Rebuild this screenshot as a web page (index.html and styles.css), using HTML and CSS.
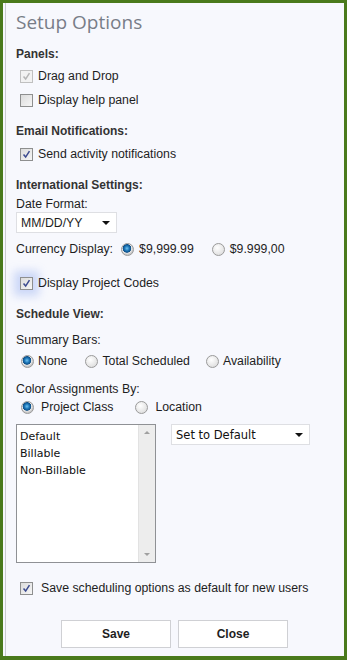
FILE: index.html
```html
<!DOCTYPE html>
<html lang="en">
<head>
  <meta charset="UTF-8">
  <title>Setup Options</title>
  <link rel="stylesheet" href="styles.css">
</head>
<body>

<div class="dialog">
  <h1 class="title">Setup Options</h1>

  <div class="heading">Panels:</div>
  <div class="row">
    <span class="box disabled"><svg viewBox="0 0 13 13"><path d="M3 6.5 L5.5 9.5 L10 2.5" /></svg></span>
    <span class="muted-label">Drag and Drop</span>
  </div>
  <div class="row">
    <span class="box"></span>
    <span>Display help panel</span>
  </div>

  <div class="heading gap">Email Notifications:</div>
  <div class="row">
    <span class="box"><svg viewBox="0 0 13 13"><path d="M3 6.5 L5.5 9.5 L10 2.5" /></svg></span>
    <span>Send activity notifications</span>
  </div>

  <div class="heading gap">International Settings:</div>
  <div class="label">Date Format:</div>
  <div class="select date-select">
    <span>MM/DD/YY</span>
    <span class="arrow"></span>
  </div>
  <div class="row currency">
    <span>Currency Display:</span>
    <span class="radio on"></span><span>$9,999.99</span>
    <span class="radio second"></span><span>$9.999,00</span>
  </div>

  <div class="row codes">
    <span class="box focus"><svg viewBox="0 0 13 13"><path d="M3 6.5 L5.5 9.5 L10 2.5" /></svg></span>
    <span>Display Project Codes</span>
  </div>

  <div class="heading schedule">Schedule View:</div>
  <div class="label sub">Summary Bars:</div>
  <div class="row radios">
    <span class="radio on"></span><span class="opt-none">None</span>
    <span class="radio"></span><span class="opt-total">Total Scheduled</span>
    <span class="radio"></span><span>Availability</span>
  </div>
  <div class="label sub2">Color Assignments By:</div>
  <div class="row radios color-row">
    <span class="radio on"></span><span class="opt-class">Project Class</span>
    <span class="radio"></span><span>Location</span>
  </div>

  <div class="lists">
    <div class="listbox">
      <div class="items">
        <div>Default</div>
        <div>Billable</div>
        <div>Non-Billable</div>
      </div>
      <div class="scrollbar">
        <span class="up"></span>
        <span class="down"></span>
      </div>
    </div>
    <div class="select default-select">
      <span>Set to Default</span>
      <span class="arrow"></span>
    </div>
  </div>

  <div class="row save-default">
    <span class="box"><svg viewBox="0 0 13 13"><path d="M3 6.5 L5.5 9.5 L10 2.5" /></svg></span>
    <span>Save scheduling options as default for new users</span>
  </div>

  <div class="buttons">
    <button class="btn">Save</button>
    <button class="btn">Close</button>
  </div>
</div>

</body>
</html>
```

FILE: styles.css
```css
html, body {
  margin: 0;
  padding: 0;
  height: 100%;
}

body {
  font-family: "Liberation Sans", Arial, sans-serif;
  font-size: 12.3px;
  color: #1e1e1e;
}

.dialog {
  box-sizing: border-box;
  height: 660px;
  border: 3px solid #4a7a1c;
  border-bottom-width: 4px;
  background: #f7f8fd;
  box-shadow: inset 2px 0 0 #f7f8fd, inset 3px 0 0 #c9cbd0;
  padding: 7px 13px 0 13px;
}

.title {
  margin: 0;
  font-family: "Open Sans", "Liberation Sans", sans-serif;
  font-weight: normal;
  font-size: 19px;
  line-height: 24px;
  color: #787d88;
}

.heading {
  font-weight: bold;
  font-size: 12px;
  color: #333;
  line-height: 16px;
  margin-top: 12px;
  margin-bottom: 2px;
}

.heading.gap {
  margin-top: 11px;
  margin-bottom: 3px;
}

.label {
  line-height: 16px;
  margin-top: 1px;
}

.row {
  display: flex;
  align-items: center;
  height: 24px;
}

.box {
  box-sizing: border-box;
  width: 13px;
  height: 13px;
  margin: 0 5px 0 4px;
  border: 1px solid #8e8f8f;
  background: linear-gradient(135deg, #dcdcdc, #f6f6f6);
  display: flex;
}

.box svg {
  width: 11px;
  height: 11px;
}

.box path {
  fill: none;
  stroke: #3b4a8f;
  stroke-width: 1.8;
}

.box.disabled {
  border-color: #c0c0c0;
  background: #f2f2f2;
}

.box.disabled path {
  stroke: #b5b5b5;
}

.muted-label {
  color: #1e1e1e;
}

.box.focus {
  box-shadow: 0 0 8px 6px rgba(140, 168, 240, 0.4);
}

.select {
  box-sizing: border-box;
  display: flex;
  align-items: center;
  justify-content: space-between;
  height: 21px;
  background: #fff;
  border: 1px solid #dedfe3;
  padding: 0 6px 0 4px;
}

.date-select {
  width: 101px;
}

.arrow {
  width: 0;
  height: 0;
  border-left: 4px solid transparent;
  border-right: 4px solid transparent;
  border-top: 4px solid #111;
}

.radio {
  box-sizing: border-box;
  width: 13px;
  height: 13px;
  border-radius: 50%;
  border: 1px solid #9a9a9a;
  background: radial-gradient(circle at 40% 35%, #ffffff, #d6d6d6);
  margin-right: 5px;
}

.radio.on {
  background: radial-gradient(circle at 45% 40%, #6fc3f2 0, #1a73b5 2.5px, #0f4f86 4px, #e8e8e8 4.6px, #c8c8c8 6px);
}

.currency {
  height: 22px;
  margin-top: 5px;
}

.currency > span:first-child {
  margin-right: 8px;
}

.currency .second {
  margin-left: 18px;
}

.codes {
  margin-top: 11px;
}

.codes .box {
  margin-left: 4px;
}

.schedule {
  margin-top: 11px;
  margin-bottom: 0;
}

.sub {
  margin-top: 10px;
}

.radios {
  height: 20px;
  margin-top: 3px;
  padding-left: 5px;
}

.radios .radio {
  margin-right: 4px;
}

.opt-none {
  margin-right: 18px;
}

.opt-total {
  margin-right: 16px;
}

.sub2 {
  margin-top: 10px;
}

.color-row {
  margin-top: 0;
}

.color-row .radio {
  margin-right: 7px;
}

.opt-class {
  margin-right: 22px;
}

.lists {
  display: flex;
  align-items: flex-start;
  gap: 15px;
  margin-top: 7px;
}

.listbox {
  box-sizing: border-box;
  display: flex;
  width: 140px;
  height: 139px;
  background: #fff;
  border: 1px solid #8f9195;
}

.items {
  flex: 1;
  padding: 3px 3px;
  font-family: "DejaVu Sans", Tahoma, sans-serif;
  font-size: 11px;
  line-height: 17px;
  color: #111;
}

.scrollbar {
  width: 16px;
  background: #ededed;
  border-left: 1px solid #e2e2e2;
  display: flex;
  flex-direction: column;
  justify-content: space-between;
  align-items: center;
  padding: 6px 0;
}

.up, .down {
  width: 0;
  height: 0;
  border-left: 3px solid transparent;
  border-right: 3px solid transparent;
}

.up {
  border-bottom: 3px solid #a0a0a0;
}

.down {
  border-top: 3px solid #a0a0a0;
}

.default-select {
  width: 139px;
  font-family: "DejaVu Sans", Tahoma, sans-serif;
  font-size: 11.5px;
  color: #111;
}

.save-default {
  margin-top: 13px;
}

.save-default .box {
  margin-right: 8px;
}

.buttons {
  display: flex;
  justify-content: center;
  gap: 7px;
  margin-top: 20px;
  padding-left: 2px;
}

.btn {
  box-sizing: border-box;
  width: 110px;
  height: 28px;
  background: #fff;
  border: 1px solid #cfd0d4;
  font-family: "Liberation Sans", Arial, sans-serif;
  font-weight: bold;
  font-size: 12px;
  color: #1e1e1e;
}
```
